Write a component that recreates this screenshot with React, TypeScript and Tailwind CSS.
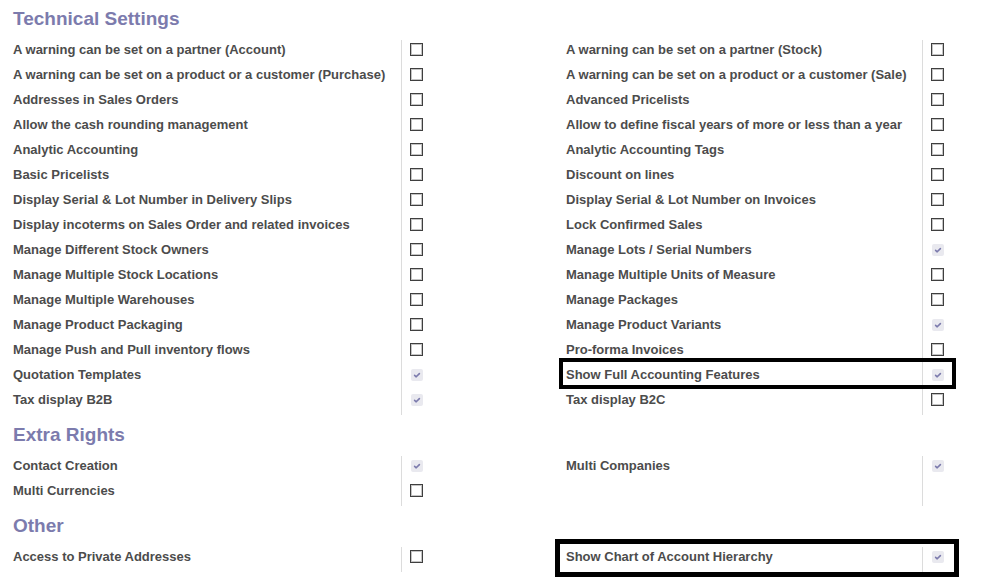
import React from "react";

type Item = { label: string; checked: boolean | null; box?: 1 | 2 };

const tech: [Item[], Item[]] = [
  [
    { label: "A warning can be set on a partner (Account)", checked: false },
    { label: "A warning can be set on a product or a customer (Purchase)", checked: false },
    { label: "Addresses in Sales Orders", checked: false },
    { label: "Allow the cash rounding management", checked: false },
    { label: "Analytic Accounting", checked: false },
    { label: "Basic Pricelists", checked: false },
    { label: "Display Serial & Lot Number in Delivery Slips", checked: false },
    { label: "Display incoterms on Sales Order and related invoices", checked: false },
    { label: "Manage Different Stock Owners", checked: false },
    { label: "Manage Multiple Stock Locations", checked: false },
    { label: "Manage Multiple Warehouses", checked: false },
    { label: "Manage Product Packaging", checked: false },
    { label: "Manage Push and Pull inventory flows", checked: false },
    { label: "Quotation Templates", checked: true },
    { label: "Tax display B2B", checked: true },
  ],
  [
    { label: "A warning can be set on a partner (Stock)", checked: false },
    { label: "A warning can be set on a product or a customer (Sale)", checked: false },
    { label: "Advanced Pricelists", checked: false },
    { label: "Allow to define fiscal years of more or less than a year", checked: false },
    { label: "Analytic Accounting Tags", checked: false },
    { label: "Discount on lines", checked: false },
    { label: "Display Serial & Lot Number on Invoices", checked: false },
    { label: "Lock Confirmed Sales", checked: false },
    { label: "Manage Lots / Serial Numbers", checked: true },
    { label: "Manage Multiple Units of Measure", checked: false },
    { label: "Manage Packages", checked: false },
    { label: "Manage Product Variants", checked: true },
    { label: "Pro-forma Invoices", checked: false },
    { label: "Show Full Accounting Features", checked: true, box: 1 },
    { label: "Tax display B2C", checked: false },
  ],
];

const extra: [Item[], Item[]] = [
  [
    { label: "Contact Creation", checked: true },
    { label: "Multi Currencies", checked: false },
  ],
  [
    { label: "Multi Companies", checked: true },
    { label: "", checked: null },
  ],
];

const other: [Item[], Item[]] = [
  [{ label: "Access to Private Addresses", checked: false }],
  [{ label: "Show Chart of Account Hierarchy", checked: true, box: 2 }],
];

function Check({ checked }: { checked: boolean | null }) {
  if (checked === null) return null;
  if (checked) {
    return (
      <div className="w-[13px] h-[13px] flex items-center justify-center">
        <div className="w-[12px] h-[12px] rounded-[2px] bg-[#e9e9ef] flex items-center justify-center">
          <svg width="12" height="12" viewBox="0 0 12 12">
            <path d="M3.6 6.4 L5.2 7.8 L8.4 4.6" fill="none" stroke="#7c7bad" strokeWidth="1.6" strokeLinecap="round" strokeLinejoin="round" />
          </svg>
        </div>
      </div>
    );
  }
  return <div className="w-[13px] h-[13px] border border-[#3f3f3f] bg-white shadow-[inset_0_0_0_1px_#c4c4c4]" />;
}

function Group({ items, labelW, side }: { items: Item[]; labelW: string; side: "l" | "r" }) {
  return (
    <div className="flex">
      <div className={`${labelW} flex flex-col pl-[13px]`}>
        {items.map((it, i) => (
          <div key={i} className="relative h-[25px] leading-[25px] whitespace-nowrap">
            {it.label}
            {it.box === 1 && (
              <div className="absolute left-[-7px] right-[-34px] top-[-4px] bottom-[-2px] border-[4px] border-black pointer-events-none" />
            )}
            {it.box === 2 && (
              <div className="absolute left-[-11px] right-[-37px] top-[-5px] bottom-[-8px] border-[5px] border-black pointer-events-none" />
            )}
          </div>
        ))}
      </div>
      <div className={`mt-[3px] border-l border-[#dcdcdc] flex flex-col ${side === "l" ? "flex-1" : "w-[83px]"}`}>
        <div className="-mt-[3px] mb-[3px] flex flex-col">
          {items.map((it, i) => (
            <div key={i} className="h-[25px] pl-[8px] flex items-center">
              <Check checked={it.checked} />
            </div>
          ))}
        </div>
      </div>
    </div>
  );
}

function Section({ title, data, first }: { title: string; data: [Item[], Item[]]; first?: boolean }) {
  return (
    <div className={first ? "" : "mt-[1px]"}>
      <div className="h-[37px] leading-[37px] pl-[13px] text-[19px] font-bold text-[#7c7bad]">{title}</div>
      <div className="grid grid-cols-[553px_1fr]">
        <Group items={data[0]} labelW="w-[401px]" side="l" />
        <Group items={data[1]} labelW="w-[369px]" side="r" />
      </div>
    </div>
  );
}

export default function App() {
  return (
    <div className="w-[1005px] h-[587px] overflow-hidden bg-white font-['Liberation_Sans',Arial,sans-serif] text-[13px] font-bold text-[#4c4c4c]">
      <Section title="Technical Settings" data={tech} first />
      <Section title="Extra Rights" data={extra} />
      <Section title="Other" data={other} />
    </div>
  );
}
